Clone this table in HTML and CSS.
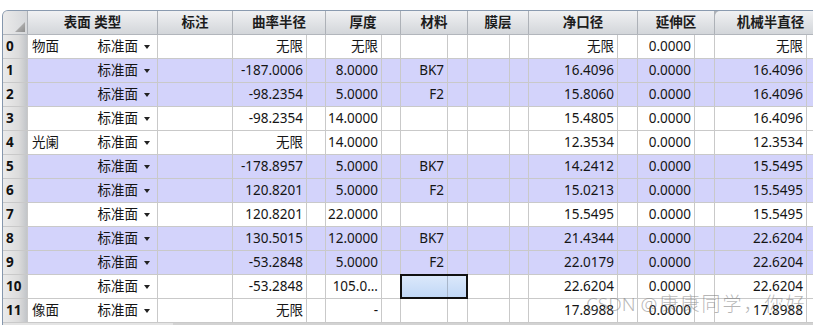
FILE: index.html
```html
<!DOCTYPE html>
<html lang="zh-CN">
<head>
<meta charset="utf-8">
<title>镜头数据</title>
<link rel="stylesheet" href="styles.css">
</head>
<body>
<div class="sheet">
  <div class="grid head">
    <div class="hc corner"></div>
    <div class="hc">表面 类型</div>
    <div class="hc">标注</div>
    <div class="hc s2">曲率半径</div>
    <div class="hc s2">厚度</div>
    <div class="hc s2">材料</div>
    <div class="hc s2">膜层</div>
    <div class="hc s2">净口径</div>
    <div class="hc s2">延伸区</div>
    <div class="hc s2 mr">机械半直径</div>
  </div>
  <div class="rows">
    <div class="grid r">
      <div class="rn">0</div><div class="ty"><span>物面</span><span class="dd">标准面</span></div><div></div>
      <div>无限</div><div></div><div>无限</div><div></div><div></div><div></div><div></div><div></div>
      <div>无限</div><div></div><div>0.0000</div><div></div><div>无限</div><div></div>
    </div>
    <div class="grid r lav">
      <div class="rn">1</div><div class="ty"><span></span><span class="dd">标准面</span></div><div></div>
      <div>-187.0006</div><div></div><div>8.0000</div><div></div><div>BK7</div><div></div><div></div><div></div>
      <div>16.4096</div><div></div><div>0.0000</div><div></div><div>16.4096</div><div></div>
    </div>
    <div class="grid r lav">
      <div class="rn">2</div><div class="ty"><span></span><span class="dd">标准面</span></div><div></div>
      <div>-98.2354</div><div></div><div>5.0000</div><div></div><div>F2</div><div></div><div></div><div></div>
      <div>15.8060</div><div></div><div>0.0000</div><div></div><div>16.4096</div><div></div>
    </div>
    <div class="grid r">
      <div class="rn">3</div><div class="ty"><span></span><span class="dd">标准面</span></div><div></div>
      <div>-98.2354</div><div></div><div>14.0000</div><div></div><div></div><div></div><div></div><div></div>
      <div>15.4805</div><div></div><div>0.0000</div><div></div><div>16.4096</div><div></div>
    </div>
    <div class="grid r">
      <div class="rn">4</div><div class="ty"><span>光阑</span><span class="dd">标准面</span></div><div></div>
      <div>无限</div><div></div><div>14.0000</div><div></div><div></div><div></div><div></div><div></div>
      <div>12.3534</div><div></div><div>0.0000</div><div></div><div>12.3534</div><div></div>
    </div>
    <div class="grid r lav">
      <div class="rn">5</div><div class="ty"><span></span><span class="dd">标准面</span></div><div></div>
      <div>-178.8957</div><div></div><div>5.0000</div><div></div><div>BK7</div><div></div><div></div><div></div>
      <div>14.2412</div><div></div><div>0.0000</div><div></div><div>15.5495</div><div></div>
    </div>
    <div class="grid r lav">
      <div class="rn">6</div><div class="ty"><span></span><span class="dd">标准面</span></div><div></div>
      <div>120.8201</div><div></div><div>5.0000</div><div></div><div>F2</div><div></div><div></div><div></div>
      <div>15.0213</div><div></div><div>0.0000</div><div></div><div>15.5495</div><div></div>
    </div>
    <div class="grid r">
      <div class="rn">7</div><div class="ty"><span></span><span class="dd">标准面</span></div><div></div>
      <div>120.8201</div><div></div><div>22.0000</div><div></div><div></div><div></div><div></div><div></div>
      <div>15.5495</div><div></div><div>0.0000</div><div></div><div>15.5495</div><div></div>
    </div>
    <div class="grid r lav">
      <div class="rn">8</div><div class="ty"><span></span><span class="dd">标准面</span></div><div></div>
      <div>130.5015</div><div></div><div>12.0000</div><div></div><div>BK7</div><div></div><div></div><div></div>
      <div>21.4344</div><div></div><div>0.0000</div><div></div><div>22.6204</div><div></div>
    </div>
    <div class="grid r lav">
      <div class="rn">9</div><div class="ty"><span></span><span class="dd">标准面</span></div><div></div>
      <div>-53.2848</div><div></div><div>5.0000</div><div></div><div>F2</div><div></div><div></div><div></div>
      <div>22.0179</div><div></div><div>0.0000</div><div></div><div>22.6204</div><div></div>
    </div>
    <div class="grid r">
      <div class="rn">10</div><div class="ty"><span></span><span class="dd">标准面</span></div><div></div>
      <div>-53.2848</div><div></div><div>105.0...</div><div></div><div class="sel"></div><div></div><div></div>
      <div>22.6204</div><div></div><div>0.0000</div><div></div><div>22.6204</div><div></div>
    </div>
    <div class="grid r">
      <div class="rn">11</div><div class="ty"><span>像面</span><span class="dd">标准面</span></div><div></div>
      <div>无限</div><div></div><div>-</div><div></div><div></div><div></div><div></div><div></div>
      <div>17.8988</div><div></div><div>0.0000</div><div></div><div>17.8988</div><div></div>
    </div>
  </div>
  <div class="scroll"></div>
</div>
<div class="wm">CSDN @<span class="wm-cjk">康康同学，你好</span></div>
</body>
</html>
```

FILE: styles.css
```css
html, body {
  margin: 0;
  padding: 0;
}

body {
  position: relative;
  width: 813px;
  height: 325px;
  overflow: hidden;
  background: #ffffff;
  font-family: "Noto Sans", "Noto Sans CJK SC", sans-serif;
  font-size: 13.5px;
  color: #151515;
}

.sheet {
  margin: 10px 0 0 2px;
  width: 900px;
  border-left: 1px solid #8597ad;
  border-top: 1px solid #8a9bb0;
  border-top-left-radius: 6px;
  overflow: hidden;
}

.grid {
  display: grid;
  grid-template-columns: 24px 129px 74px 73px 18px 55px 18px 46px 19px 41px 18px 88px 19px 56px 19px 91px 19px;
  column-gap: 1px;
}

/* header */
.head {
  height: 23px;
  background: #adb1b7;
  border-bottom: 1px solid #b2b6bc;
}

.hc {
  background: linear-gradient(#f0f1f3, #d3d6da);
  font-weight: 700;
  text-align: center;
  line-height: 23px;
  white-space: nowrap;
  color: #1c1c1c;
}

.s2 {
  grid-column: span 2;
}

.mr {
  border-top-left-radius: 5px;
}

.corner {
  position: relative;
  background: linear-gradient(to right, #eaeaea, #d6d8db);
}

.corner::after {
  content: "";
  position: absolute;
  right: 2px;
  bottom: 2px;
  width: 10px;
  height: 10px;
  background: linear-gradient(135deg, #c8c8c8, #8e8e8e);
  clip-path: polygon(100% 0, 100% 100%, 0 100%);
}

/* body rows */
.rows {
  display: flex;
  flex-direction: column;
  row-gap: 1px;
  background: #c9c9c9;
  border-bottom: 1px solid #c9c9c9;
}

.r {
  height: 23px;
  background: #c9c9c9;
}

.r > div {
  background: #ffffff;
  line-height: 23px;
  text-align: right;
  padding-right: 3px;
  white-space: nowrap;
  overflow: hidden;
}

.lav > div {
  background: #d3d3fb;
}

.r > .rn {
  background: linear-gradient(to right, #ebebeb, #dcdcdc 65%, #c2c5c9);
  font-weight: 700;
  text-align: left;
  padding: 0 0 0 3px;
  color: #111;
}

.r > .ty {
  display: flex;
  justify-content: space-between;
  align-items: center;
  padding: 0 7px 0 4px;
}

.dd {
  display: flex;
  align-items: center;
  gap: 6px;
}

.dd::after {
  content: "";
  width: 0;
  height: 0;
  border-left: 3px solid transparent;
  border-right: 3px solid transparent;
  border-top: 4px solid #222;
  margin-top: 1px;
}

.r > .sel {
  grid-column: span 2;
  position: relative;
  z-index: 1;
  padding: 0;
  overflow: visible;
  background:
    linear-gradient(to right, transparent 46px, #a8b6ca 46px, #a8b6ca 47px, transparent 47px),
    linear-gradient(#dce9fb, #c0d7f6);
  outline: 2px solid #111;
  outline-offset: -1px;
}

.scroll {
  height: 3px;
  background: linear-gradient(to right, #e4e4e4 0, #e4e4e4 170px, #d2d2d2 170px);
}

.wm {
  position: absolute;
  left: 586px;
  top: 289px;
  font-family: "Noto Sans", "Noto Sans CJK SC", sans-serif;
  font-size: 19px;
  font-weight: 300;
  color: rgba(110, 110, 110, 0.5);
  white-space: nowrap;
  pointer-events: none;
}

.wm-cjk {
  margin-left: 2px;
  letter-spacing: 2px;
}
```
